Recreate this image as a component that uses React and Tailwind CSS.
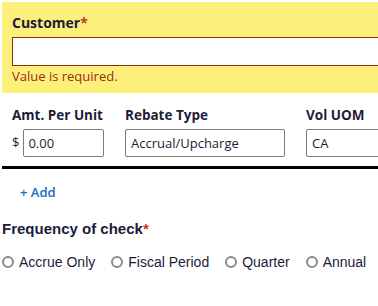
import React from 'react';

const options = ['Accrue Only', 'Fiscal Period', 'Quarter', 'Annual'];

function Radio({ label }) {
  return (
    <label className="flex items-center gap-[5px]">
      <span className="w-[12px] h-[12px] rounded-full border-2 border-[#8a8a8a] bg-white" />
      <span>{label}</span>
    </label>
  );
}

export default function App() {
  return (
    <div className="w-[378px] h-[306px] overflow-hidden bg-white font-['Open_Sans',sans-serif] text-[#1c1c3a]">
      {/* Customer (error state) */}
      <div className="mt-[2px] ml-[2px] h-[91px] bg-[#fdf07a] pl-[10px] pt-[11px]">
        <div className="text-[14px] font-bold leading-[19px]">
          Customer<span className="text-[#c0392b]">*</span>
        </div>
        <div className="mt-[5px] h-[29px] w-[400px] border border-[#8b2c0c] bg-white" />
        <div className="mt-[1px] text-[13px] leading-[18px] text-[#9b2d12]">Value is required.</div>
      </div>

      {/* Rebate row */}
      <div className="mt-[13px] pl-[12px] flex gap-[21px] whitespace-nowrap">
        <div className="w-[92px] shrink-0">
          <div className="text-[13.5px] font-bold leading-[18px]">Amt. Per Unit</div>
          <div className="mt-[5px] flex items-center gap-[4px]">
            <span className="text-[13px]">$</span>
            <div className="w-[82px] h-[28px] border border-[#7a7a7a] rounded-[2px] px-[4px] text-[13px] leading-[26px]">0.00</div>
          </div>
        </div>
        <div className="w-[160px] shrink-0">
          <div className="text-[13.5px] font-bold leading-[18px]">Rebate Type</div>
          <div className="mt-[5px] h-[28px] w-[160px] border border-[#7a7a7a] rounded-[2px] px-[5px] text-[13px] leading-[26px]">Accrual/Upcharge</div>
        </div>
        <div className="shrink-0">
          <div className="text-[13.5px] font-bold leading-[18px]">Vol UOM</div>
          <div className="mt-[5px] h-[28px] w-[100px] border border-[#7a7a7a] rounded-[2px] px-[5px] text-[13px] leading-[26px]">CA</div>
        </div>
      </div>
      <div className="mt-[9px] ml-[2px] h-[3px] bg-black" />

      <div className="mt-[14px] pl-[20px] text-[13px] font-semibold leading-[18px] text-[#1a6bc4]">+ Add</div>

      <div className="mt-[19px] pl-[2px] font-['Liberation_Sans',Arial,sans-serif] text-[15px] font-bold leading-[18px]">
        Frequency of check<span className="text-[#c0392b]">*</span>
      </div>

      <div className="mt-[15px] pl-[2px] flex gap-[16px] font-['Liberation_Sans',Arial,sans-serif] text-[14px] leading-[18px] whitespace-nowrap">
        {options.map((o) => (
          <Radio key={o} label={o} />
        ))}
      </div>
    </div>
  );
}
